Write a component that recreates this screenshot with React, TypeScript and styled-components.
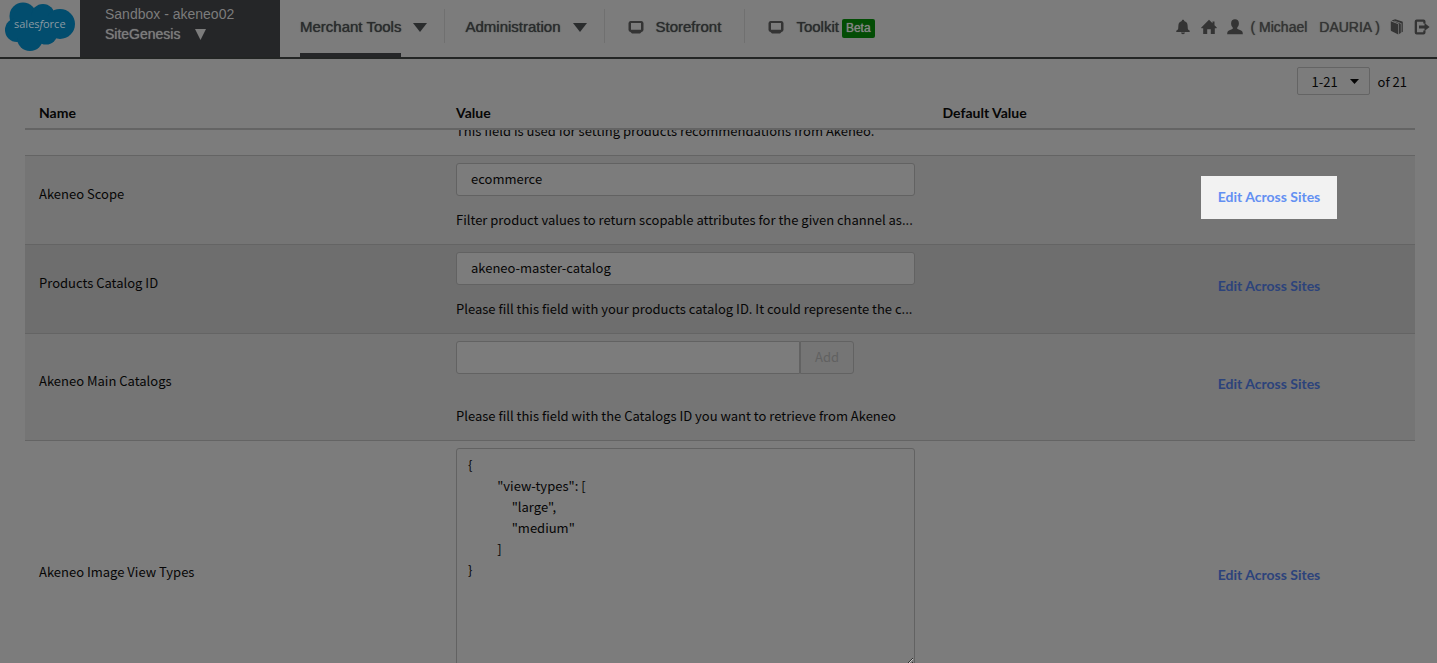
import React from "react";
import styled, { createGlobalStyle } from "styled-components";

const c = {
  page: "#7c7c7c",
  ink: "#2a2c2d",
  icon: "#343434",
  line: "#646464",
  rowLight: "#757575",
  rowDark: "#6e6e6e",
  text: "#060606",
  link: "#2c437b",
};

const GlobalStyle = createGlobalStyle`
  *, *::before, *::after { box-sizing: border-box; }
  body {
    margin: 0;
    background: ${c.page};
    color: ${c.text};
    font: 13px/21px "Noto Sans CJK SC", "Noto Sans", sans-serif;
  }
  button, input, select, textarea { font: inherit; color: inherit; }
  a { color: inherit; text-decoration: none; }
`;

const Page = styled.div`
  height: 100vh;
  overflow: hidden;
  background: ${c.page};
`;

/* ---------- top bar ---------- */

const TopBar = styled.header`
  display: flex;
  align-items: stretch;
  height: 59px;
  border-bottom: 2px solid #232524;
  color: ${c.ink};
  font: 14px/20px "Liberation Sans", Arial, sans-serif;
  text-shadow: 0 0 1px currentColor;
  white-space: nowrap;
`;

const LogoLink = styled.a`
  width: 80px;
  flex: none;
  svg { display: block; text-shadow: none; }
`;

const SitePicker = styled.button`
  width: 200px;
  flex: none;
  padding: 4px 25px 0;
  border: 0;
  background: #252628;
  color: #7c7c7c;
  text-align: left;
  display: flex;
  flex-direction: column;
`;

const SiteName = styled.span`
  display: flex;
  align-items: center;
  gap: 15px;
  text-shadow: 0 0 1px currentColor;
`;

const Nav = styled.nav`
  display: flex;
  flex: 1;
  font-size: 15px;
`;

const NavItem = styled.div<{ $last?: boolean }>`
  display: flex;
  margin: 9px 0 0;
  background: linear-gradient(#707070, #707070) no-repeat right top / ${(p) => (p.$last ? "0" : "1px")} 34px;
`;

const navEntry = `
  display: flex;
  align-items: center;
  height: 48px;
  padding: 0 18px 12px 20px;
  border: 0;
  background: none;
  text-shadow: inherit;
`;

const NavButton = styled.button`
  ${navEntry}
  gap: 12px;
`;

const NavLink = styled.a`
  ${navEntry}
  padding: 0 24px 12px 23px;
  gap: 12px;
`;

const NavLabel = styled.span<{ $active?: boolean }>`
  display: flex;
  height: 48px;
  padding-top: 8px;
  margin-bottom: -12px;
  border-bottom: 4px solid ${(p) => (p.$active ? "#252628" : "transparent")};
`;

const Beta = styled.span`
  margin: 2px 0 0 -9px;
  padding: 0 4px;
  border-radius: 2px;
  background: #034d05;
  color: #858585;
  font-size: 12px;
  line-height: 19px;
`;

const UserTools = styled.div`
  display: flex;
  align-items: center;
  gap: 10px;
  padding: 0 7px 4px 0;
  color: ${c.icon};
  a { display: flex; align-items: center; gap: 8px; }
  svg { display: block; }
`;

const FullName = styled.span`
  display: flex;
  gap: 12px;
`;

/* ---------- preferences table ---------- */

const Main = styled.main`
  padding: 8px 22px 0 25px;
`;

const Pager = styled.div`
  display: flex;
  justify-content: flex-end;
  align-items: center;
  gap: 8px;
  padding-right: 8px;
  height: 28px;
`;

const PagerBox = styled.div`
  position: relative;
  svg {
    position: absolute;
    right: 11px;
    top: 12px;
    pointer-events: none;
  }
`;

const PagerSelect = styled.select`
  display: block;
  width: 73px;
  height: 28px;
  padding: 0 14px;
  appearance: none;
  border: 1px solid ${c.line};
  border-radius: 2px;
  background: transparent;
`;

const PrefTable = styled.table`
  width: 100%;
  border-collapse: collapse;
  table-layout: fixed;
`;

const HeadCell = styled.th<{ $width: string }>`
  width: ${(p) => p.$width};
  height: 34px;
  padding: 2px 14px 0;
  border-bottom: 2px solid ${c.line};
  text-align: left;
  font: 700 14px/21px Lato, sans-serif;
`;

const Row = styled.tr<{ $tone?: "light" | "dark" }>`
  background: ${(p) => (p.$tone === "light" ? c.rowLight : p.$tone === "dark" ? c.rowDark : "transparent")};
  border-bottom: 1px solid ${c.line};
`;

const NameCell = styled.th`
  padding: 0 14px 14px;
  text-align: left;
  font-weight: 400;
`;

const ValueCell = styled.td`
  padding: 7px 14px 14px;
`;

const LinkCell = styled.td`
  padding: 0 0 5px;
  text-align: center;
`;

const EditLink = styled.a<{ $spotlight?: boolean }>`
  display: block;
  width: 136px;
  margin: 0 auto;
  padding: 10px 0 12px;
  font: 700 14px/21px Lato, sans-serif;
  color: ${(p) => (p.$spotlight ? "#6390f2" : c.link)};
  background: ${(p) => (p.$spotlight ? "#f2f2f2" : "transparent")};
`;

const PeekCell = styled.td`
  padding: 0;
`;

const Peek = styled.div`
  display: flex;
  flex-direction: column;
  justify-content: flex-end;
  height: 25px;
  padding: 0 14px 14px;
  overflow: hidden;
  white-space: nowrap;
`;

const TextInput = styled.input`
  display: block;
  width: 100%;
  height: 33px;
  padding: 0 14px 2px;
  border: 1px solid #626262;
  border-radius: 3px;
  background: ${c.page};
  outline: 0;
`;

const AddGroup = styled.div`
  display: flex;
  width: 398px;
  margin-bottom: 31px;
  ${TextInput} { flex: 1; min-width: 0; border-radius: 3px 0 0 3px; }
`;

const AddButton = styled.button`
  width: 54px;
  height: 33px;
  padding: 0 0 2px;
  border: 1px solid #626262;
  border-radius: 0 3px 3px 0;
  background: transparent;
  color: #616161;
`;

const TextArea = styled.textarea`
  display: block;
  width: 100%;
  height: 219px;
  padding: 5px 11px;
  border: 1px solid #626262;
  border-radius: 3px;
  background: ${c.page};
  line-height: 21px;
  resize: vertical;
  outline: 0;
`;

const Description = styled.p`
  margin: 13px 0 0;
  white-space: nowrap;
`;

/* ---------- drawings ---------- */

const SalesforceLogo = () => (
  <svg width="80" height="56" viewBox="0 0 80 56" role="img" aria-label="salesforce">
    <g fill="#024d6e">
      <circle cx="23" cy="16" r="13.5" />
      <circle cx="43" cy="15.500" r="11.500" />
      <circle cx="60" cy="24" r="15" />
      <circle cx="17" cy="30" r="12" />
      <circle cx="30" cy="38" r="13" />
      <circle cx="46" cy="33" r="11.500" />
      <path d="M14 16h46v22H14z" />
    </g>
    <text x="14" y="28" fontFamily="'Open Sans', sans-serif" fontSize="11" fill="#8b9aa2">
      sales<tspan fontStyle="italic">f</tspan>orce
    </text>
  </svg>
);

const Triangle = ({ w, h }: { w: number; h: number }) => (
  <svg width={w} height={h} viewBox="0 0 10 10" preserveAspectRatio="none" fill="currentColor" aria-hidden="true">
    <path d="M0 0H10L5 10Z" />
  </svg>
);

const ScreenIcon = () => (
  <svg width="16" height="14" viewBox="0 0 16 14" fill={c.icon} aria-hidden="true">
    <path fillRule="evenodd" d="M2.500 1h11A2.300 2.300 0 0 1 15.500 3.200v6.500a2.300 2.300 0 0 1-2 2.300L12 13.500H4L2.500 12a2.300 2.300 0 0 1-2-2.300V3.200A2.300 2.300 0 0 1 2.500 1zM3 3v6.700h10V3z" />
  </svg>
);

const BellIcon = () => (
  <svg width="16" height="16" viewBox="0 0 16 16" fill="currentColor" aria-hidden="true">
    <path d="M8 .8c.8 0 1.200.5 1.200 1.200 2 .6 3.300 2.200 3.400 4.400l.2 3.100c.1 1 .9 1.500 1.700 2.100.6.500.5 1.300-.3 1.300H1.800c-.8 0-.9-.8-.3-1.300.8-.6 1.600-1.100 1.700-2.100l.2-3.100C3.500 4.200 4.800 2.600 6.800 2c0-.7.400-1.200 1.200-1.200zM6 13.600h4c-.2 1-1 1.600-2 1.600s-1.800-.6-2-1.600z" />
  </svg>
);

const HomeIcon = () => (
  <svg width="16" height="16" viewBox="0 0 16 16" fill="currentColor" aria-hidden="true">
    <path d="M8 .8l3.500 3.400V2.500h2v3.700l2.200 2.200c.4.400.2.900-.3.900h-1.600V15H9.800v-4.800H6.200V15h-4V9.300H.6c-.5 0-.7-.5-.3-.9z" />
  </svg>
);

const UserIcon = () => (
  <svg width="16" height="16" viewBox="0 0 16 16" fill="currentColor" aria-hidden="true">
    <path d="M8 .2c2.400 0 3.900 1.600 3.900 4 0 1.500-.4 2.900-1.300 3.900-.5.600-.6 1.700 0 2 1.400.8 3.400 1.200 4.400 2.100.6.600.8 1.800.8 3H.2c0-1.200.2-2.400.8-3 1-.9 3-1.300 4.400-2.100.6-.3.500-1.400 0-2-.9-1-1.300-2.400-1.300-3.900 0-2.400 1.500-4 3.900-4z" />
  </svg>
);

const BookIcon = () => (
  <svg width="14" height="16" viewBox="0 0 14 16" fill="currentColor" aria-hidden="true">
    <path d="M.8 2.200L8.300 5.200v10.400L1.300 12C.9 11.700.8 11.500.8 11zM1.600 1.500L5.200.2l7 2.400c.5.200.6.400.6.900v9.300l-1.300.6V4.200L4.600 1.700l-1 .4 6.600 2.500c.5.200.6.400.6.900v8.600l-1.800 1V4.700z" />
  </svg>
);

const ExitIcon = () => (
  <svg width="16" height="16" viewBox="0 0 16 16" fill="currentColor" aria-hidden="true">
    <path d="M3 .5h6.500A2 2 0 0 1 11.500 2.500v2H9.300V2.800H3v10.400h6.300v-1.700h2.200v2a2 2 0 0 1-2 2H2.700a2 2 0 0 1-2-2v-11a2 2 0 0 1 2-2zM10.500 3.900L15.600 8l-5.100 4.100V9.500H5v-3h5.500z" />
  </svg>
);

/* ---------- page ---------- */

const viewTypes = `{
          "view-types": [
               "large",
               "medium"
          ]
}`;

type PrefProps = {
  id: string;
  name: string;
  tone?: "light" | "dark";
  spotlight?: boolean;
  note: string;
  children: React.ReactNode;
};

const Preference = ({ id, name, tone, spotlight, note, children }: PrefProps) => (
  <Row $tone={tone}>
    <NameCell scope="row">
      <label htmlFor={id}>{name}</label>
    </NameCell>
    <ValueCell>
      {children}
      <Description>{note}</Description>
    </ValueCell>
    <td />
    <LinkCell>
      <EditLink href="#edit" $spotlight={spotlight}>Edit Across Sites</EditLink>
    </LinkCell>
  </Row>
);

export default function App() {
  return (
    <Page>
      <GlobalStyle />
      <TopBar>
        <LogoLink href="#home"><SalesforceLogo /></LogoLink>
        <SitePicker type="button">
          <span>Sandbox - akeneo02</span>
          <SiteName>SiteGenesis <Triangle w={11} h={11} /></SiteName>
        </SitePicker>
        <Nav>
          <NavItem>
            <NavButton type="button">
              <NavLabel $active>Merchant Tools</NavLabel>
              <Triangle w={14} h={9} />
            </NavButton>
          </NavItem>
          <NavItem>
            <NavButton type="button">
              <NavLabel>Administration</NavLabel>
              <Triangle w={14} h={9} />
            </NavButton>
          </NavItem>
          <NavItem>
            <NavLink href="#storefront"><ScreenIcon /><NavLabel>Storefront</NavLabel></NavLink>
          </NavItem>
          <NavItem $last>
            <NavLink href="#toolkit"><ScreenIcon /><NavLabel>Toolkit</NavLabel><Beta>Beta</Beta></NavLink>
          </NavItem>
        </Nav>
        <UserTools>
          <a href="#alerts" aria-label="Notifications"><BellIcon /></a>
          <a href="#home" aria-label="Home"><HomeIcon /></a>
          <a href="#profile">
            <UserIcon />
            <FullName><span>( Michael</span><span>DAURIA )</span></FullName>
          </a>
          <a href="#docs" aria-label="Documentation"><BookIcon /></a>
          <a href="#logout" aria-label="Log out"><ExitIcon /></a>
        </UserTools>
      </TopBar>
      <Main>
        <Pager>
          <PagerBox>
            <PagerSelect aria-label="Page range"><option>1-21</option></PagerSelect>
            <Triangle w={9} h={5} />
          </PagerBox>
          <span>of 21</span>
        </Pager>
        <PrefTable>
          <thead>
            <tr>
              <HeadCell $width="30%">Name</HeadCell>
              <HeadCell $width="35%">Value</HeadCell>
              <HeadCell $width="14%">Default Value</HeadCell>
              <HeadCell $width="21%" />
            </tr>
          </thead>
          <tbody>
            <Row>
              <PeekCell />
              <PeekCell><Peek>This field is used for setting products recommendations from Akeneo.</Peek></PeekCell>
              <PeekCell />
              <PeekCell />
            </Row>
            <Preference id="scope" name="Akeneo Scope" tone="light" spotlight
              note="Filter product values to return scopable attributes for the given channel as...">
              <TextInput id="scope" defaultValue="ecommerce" />
            </Preference>
            <Preference id="catalog" name="Products Catalog ID" tone="dark"
              note="Please fill this field with your products catalog ID. It could represente the c...">
              <TextInput id="catalog" defaultValue="akeneo-master-catalog" />
            </Preference>
            <Preference id="main" name="Akeneo Main Catalogs" tone="light"
              note="Please fill this field with the Catalogs ID you want to retrieve from Akeneo">
              <AddGroup>
                <TextInput id="main" />
                <AddButton type="button">Add</AddButton>
              </AddGroup>
            </Preference>
            <Preference id="views" name="Akeneo Image View Types" note="View types of the product images">
              <TextArea id="views" defaultValue={viewTypes} />
            </Preference>
          </tbody>
        </PrefTable>
      </Main>
    </Page>
  );
}
